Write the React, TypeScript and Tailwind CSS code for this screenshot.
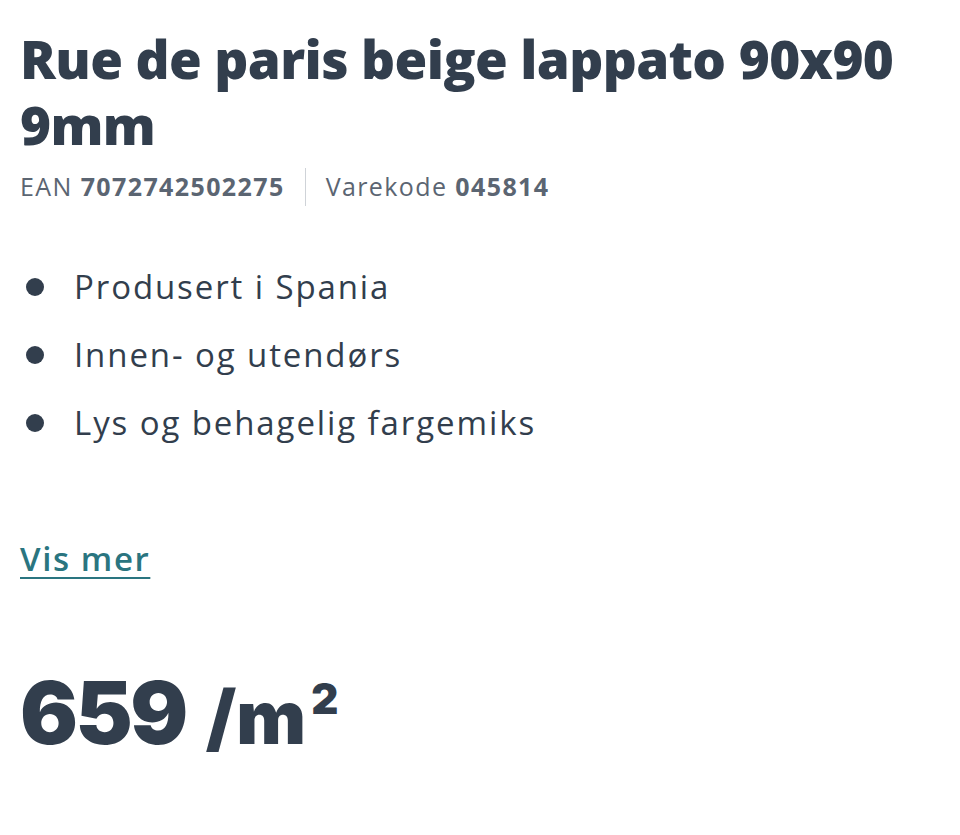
export default function App() {
  return (
    <div className="min-h-screen bg-white px-5 pt-[26px] text-[#323e4d]" style={{ fontFamily: '"Open Sans", "Noto Sans", sans-serif' }}>
      <h1 className="text-[53px] font-extrabold leading-[66px] tracking-[-0.6px]">Rue de paris beige lappato 90x90 9mm</h1>
      <div className="mt-[10px] flex items-center text-[25px] tracking-[1.4px] text-[#5b6572]">
        <span>
          EAN <span className="font-bold">7072742502275</span>
        </span>
        <span className="mx-5 h-[38px] w-px bg-[#cfd3d8]" />
        <span>
          Varekode <span className="font-bold">045814</span>
        </span>
      </div>
      <ul className="mt-[58px] flex flex-col gap-[22px] text-[33px] leading-[46px] tracking-[1.9px]">
        {["Produsert i Spania", "Innen- og utendørs", "Lys og behagelig fargemiks"].map((t) => (
          <li key={t} className="flex items-center">
            <span className="ml-[6px] mr-[30px] h-[18px] w-[18px] shrink-0 rounded-full bg-[#323e4d]" />
            {t}
          </li>
        ))}
      </ul>
      <a href="#" className="mt-[88px] inline-block text-[33px] font-semibold tracking-[1.6px] text-[#2a7580] underline decoration-[2px] underline-offset-[6px]">
        Vis mer
      </a>
      <div className="mt-[86px] flex items-baseline font-black" style={{ fontFamily: 'Inter, "Open Sans", sans-serif' }}>
        <span className="text-[86px] leading-none tracking-[-2.5px]">659</span>
        <span className="ml-5 flex items-start text-[74px] leading-none">
          /m<span className="ml-[5px] mt-[-2px] text-[42px] leading-none">2</span>
        </span>
      </div>
    </div>
  );
}
